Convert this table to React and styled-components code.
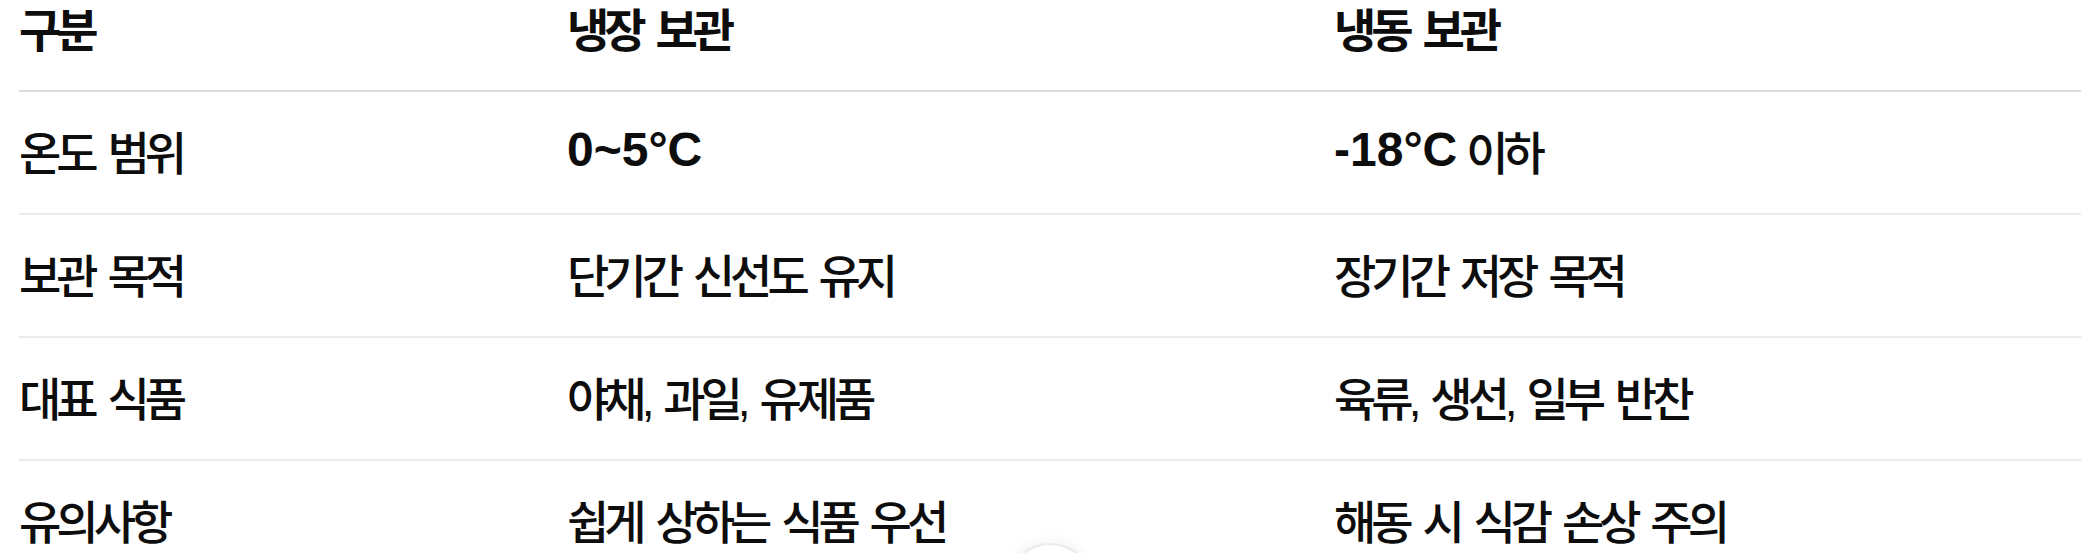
import React from "react";
import styled, { createGlobalStyle } from "styled-components";
import { ArrowDown } from "lucide-react";

const Global = createGlobalStyle`
  html, body { margin: 0; padding: 0; background: #ffffff; overflow: hidden; }
  body {
    font-family: "Liberation Sans", "Noto Sans CJK KR", sans-serif;
    color: #0d0d0d;
  }
`;

const Page = styled.div`
  position: relative;
  height: 553px;
  overflow: hidden;
  padding: 0 11px 0 19px;
  box-sizing: border-box;
`;

const Table = styled.div`
  margin-top: -31px;
  display: grid;
  grid-template-columns: 548px 767px 1fr;
`;

const Row = styled.div`
  display: contents;
`;

const Cell = styled.div`
  height: 123px;
  box-sizing: border-box;
  padding-bottom: 6px;
  display: flex;
  align-items: center;
  white-space: nowrap;
  font-size: 46px;
  letter-spacing: -5px;
  word-spacing: 6px;
  font-weight: ${(p) => (p.$head ? 700 : 500)};
  border-bottom: 2px solid ${(p) => (p.$head ? "#dadada" : "#ebebeb")};
`;

const Strong = styled.strong`
  font-family: "Liberation Sans", "Noto Sans CJK KR", sans-serif;
  font-weight: 700;
  font-size: 48px;
  letter-spacing: 0;
  word-spacing: 0;
  margin-right: 9px;
`;

const ScrollButton = styled.button`
  position: absolute;
  left: 1006px;
  top: 543px;
  width: 88px;
  height: 88px;
  border-radius: 50%;
  background: #ffffff;
  border: 2px solid rgba(0, 0, 0, 0.08);
  box-shadow: 0 2px 18px rgba(0, 0, 0, 0.08);
  display: flex;
  align-items: center;
  justify-content: center;
  color: #0d0d0d;
  padding: 0;
`;

const head = ["구분", "냉장 보관", "냉동 보관"];

const rows = [
  ["온도 범위", { b: "0~5°C", t: "" }, { b: "-18°C", t: "이하" }],
  ["보관 목적", "단기간 신선도 유지", "장기간 저장 목적"],
  ["대표 식품", "야채, 과일, 유제품", "육류, 생선, 일부 반찬"],
  ["유의사항", "쉽게 상하는 식품 우선", "해동 시 식감 손상 주의"],
];

function Content({ v }) {
  if (typeof v === "string") return v;
  return (
    <>
      <Strong>{v.b}</Strong>
      {v.t}
    </>
  );
}

export default function App() {
  return (
    <>
      <Global />
      <Page>
        <Table>
          <Row>
            {head.map((h) => (
              <Cell key={h} $head>
                {h}
              </Cell>
            ))}
          </Row>
          {rows.map((r, i) => (
            <Row key={i}>
              {r.map((c, j) => (
                <Cell key={j}>
                  <Content v={c} />
                </Cell>
              ))}
            </Row>
          ))}
        </Table>
        <ScrollButton aria-label="scroll down">
          <ArrowDown size={40} strokeWidth={2} />
        </ScrollButton>
      </Page>
    </>
  );
}
